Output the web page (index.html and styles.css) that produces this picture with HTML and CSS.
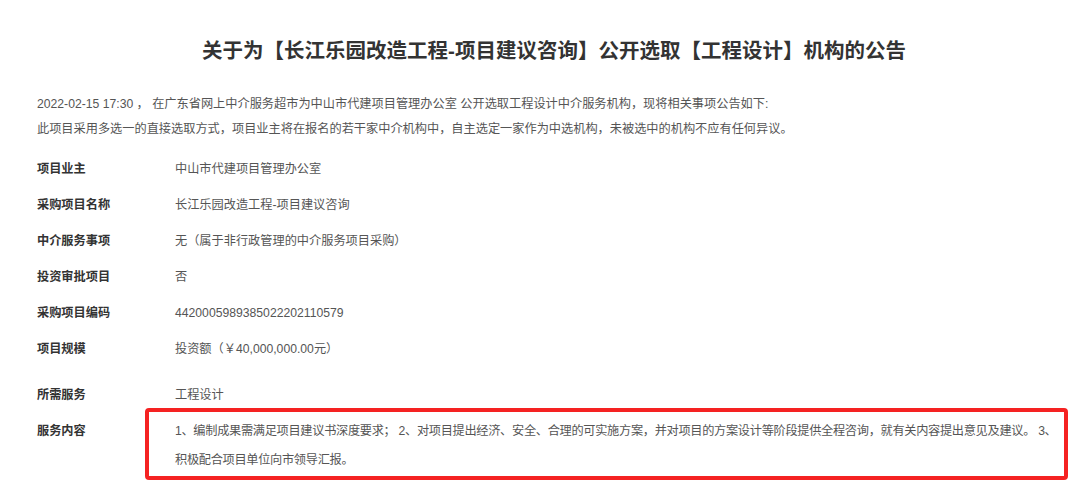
FILE: index.html
```html
<!DOCTYPE html>
<html lang="zh-CN">
<head>
  <meta charset="UTF-8">
  <meta name="viewport" content="width=device-width, initial-scale=1.0">
  <title>公告</title>

  <link rel="stylesheet" href="styles.css">
</head>

<body>

  <div class="notice">
    <h1>关于为【长江乐园改造工程-项目建议咨询】公开选取【工程设计】机构的公告</h1>

    <!-- intro text -->
    <div class="intro">
      <p>2022-02-15 17:30 ， 在广东省网上中介服务超市为中山市代建项目管理办公室 公开选取工程设计中介服务机构，现将相关事项公告如下:</p>
      <p>此项目采用多选一的直接选取方式，项目业主将在报名的若干家中介机构中，自主选定一家作为中选机构，未被选中的机构不应有任何异议。</p>
    </div>

    <!-- detail rows -->
    <div class="details">
      <div class="row"><span class="label">项目业主</span><span class="value">中山市代建项目管理办公室</span></div>
      <div class="row"><span class="label">采购项目名称</span><span class="value">长江乐园改造工程-项目建议咨询</span></div>
      <div class="row"><span class="label">中介服务事项</span><span class="value">无（属于非行政管理的中介服务项目采购）</span></div>
      <div class="row"><span class="label">投资审批项目</span><span class="value">否</span></div>
      <div class="row"><span class="label">采购项目编码</span><span class="value">4420005989385022202110579</span></div>
      <div class="row"><span class="label">项目规模</span><span class="value">投资额（￥40,000,000.00元）</span></div>
      <div class="row row-service"><span class="label">所需服务</span><span class="value">工程设计</span></div>
      <div class="row row-content">
        <span class="label">服务内容</span>
        <span class="value highlight">1、编制成果需满足项目建议书深度要求； 2、对项目提出经济、安全、合理的可实施方案，并对项目的方案设计等阶段提供全程咨询，就有关内容提出意见及建议。 3、<br>积极配合项目单位向市领导汇报。</span>
      </div>
    </div>
  </div>

</body>
</html>
```

FILE: styles.css
```css
body {
  margin: 0;
  background: #fff;
  font-family: "Liberation Sans", "Noto Sans CJK SC", sans-serif;
  color: #555;
}

.notice {
  padding: 36px 12px 0 37px;
}

h1 {
  margin: 0;
  padding-left: 3px;
  font-size: 20.5px;
  line-height: 30px;
  font-weight: bold;
  color: #333;
  text-align: center;
}

.intro {
  margin-top: 26px;
  font-size: 12.2px;
  line-height: 25px;
}

.intro p {
  margin: 0;
}

.details {
  margin-top: 9px;
  font-size: 12.2px;
}

.row {
  display: grid;
  grid-template-columns: 138px 1fr;
  line-height: 36px;
}

.label {
  font-weight: bold;
  color: #333;
}

.value {
  color: #555;
}

.row-service {
  margin-top: 14px;
  line-height: 28px;
}

.row-content {
  margin-top: -1px;
  line-height: 29px;
}

.row-content .label {
  padding-top: 9px;
}

/* red annotation box */
.highlight {
  margin-left: -30px;
  padding: 5px 4px 1px 26px;
  border: 4px solid #f52222;
  border-radius: 4px;
  white-space: nowrap;
  letter-spacing: -0.3px;
}
```
